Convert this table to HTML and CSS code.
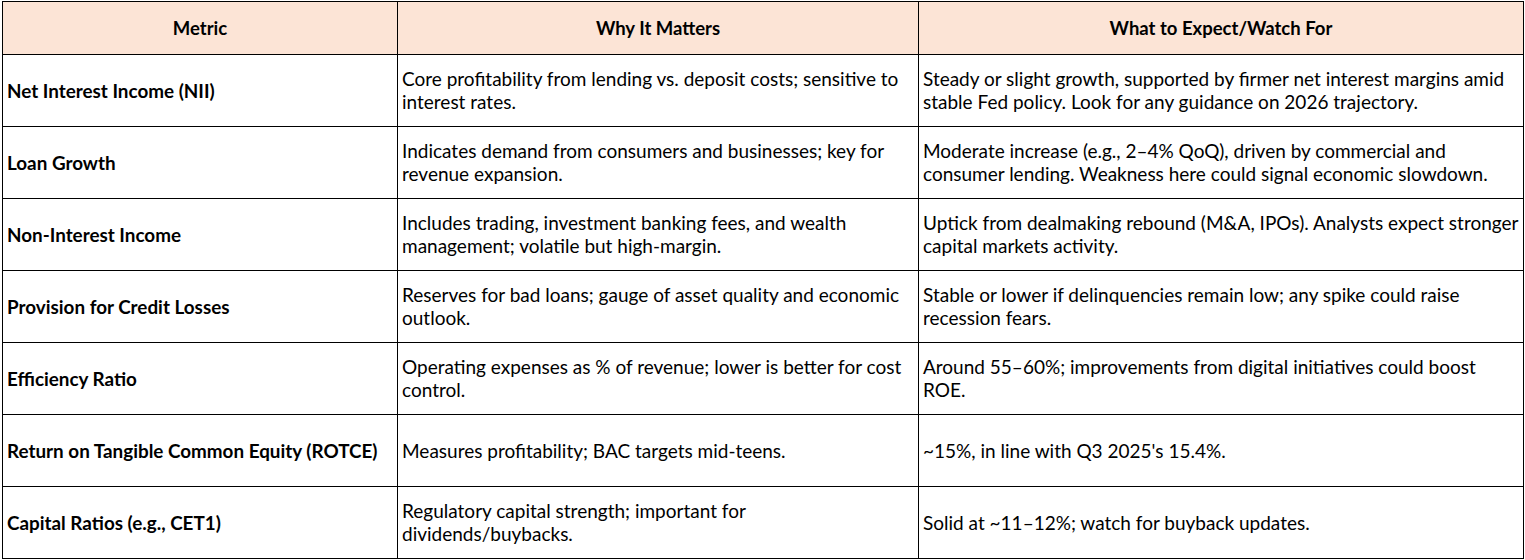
FILE: index.html
```html
<!DOCTYPE html>
<html>
<head>
<meta charset="utf-8">
<link rel="stylesheet" href="styles.css">
</head>
<body>
<table class="grid">
  <colgroup>
    <col class="c1"><col class="c2"><col class="c3">
  </colgroup>
  <thead>
    <tr class="head">
      <th>Metric</th>
      <th>Why It Matters</th>
      <th>What to Expect/Watch For</th>
    </tr>
  </thead>
  <tbody>
    <tr>
      <td class="metric">Net Interest Income (NII)</td>
      <td>Core profitability from lending vs. deposit costs; sensitive to<br>interest rates.</td>
      <td>Steady or slight growth, supported by firmer net interest margins amid<br>stable Fed policy. Look for any guidance on 2026 trajectory.</td>
    </tr>
    <tr>
      <td class="metric">Loan Growth</td>
      <td>Indicates demand from consumers and businesses; key for<br>revenue expansion.</td>
      <td>Moderate increase (e.g., 2–4% QoQ), driven by commercial and<br>consumer lending. Weakness here could signal economic slowdown.</td>
    </tr>
    <tr>
      <td class="metric">Non-Interest Income</td>
      <td>Includes trading, investment banking fees, and wealth<br>management; volatile but high-margin.</td>
      <td>Uptick from dealmaking rebound (M&amp;A, IPOs). Analysts expect stronger<br>capital markets activity.</td>
    </tr>
    <tr>
      <td class="metric">Provision for Credit Losses</td>
      <td>Reserves for bad loans; gauge of asset quality and economic<br>outlook.</td>
      <td>Stable or lower if delinquencies remain low; any spike could raise<br>recession fears.</td>
    </tr>
    <tr>
      <td class="metric">Efficiency Ratio</td>
      <td>Operating expenses as % of revenue; lower is better for cost<br>control.</td>
      <td>Around 55–60%; improvements from digital initiatives could boost<br>ROE.</td>
    </tr>
    <tr>
      <td class="metric">Return on Tangible Common Equity (ROTCE)</td>
      <td>Measures profitability; BAC targets mid-teens.</td>
      <td>~15%, in line with Q3 2025's 15.4%.</td>
    </tr>
    <tr>
      <td class="metric">Capital Ratios (e.g., CET1)</td>
      <td>Regulatory capital strength; important for<br>dividends/buybacks.</td>
      <td>Solid at ~11–12%; watch for buyback updates.</td>
    </tr>
  </tbody>
</table>
</body>
</html>
```

FILE: styles.css
```css
html, body {
  margin: 0;
  padding: 0;
  background: #ffffff;
}

body {
  padding: 1px 0 0 2px;
  font-family: Lato, "Open Sans", sans-serif;
  color: #000000;
}

.grid {
  border-collapse: collapse;
  table-layout: fixed;
  width: 1521px;
  border: 1px solid #000;
}

.c1 { width: 395px; }
.c2 { width: 521px; }
.c3 { width: 605px; }

.grid th,
.grid td {
  border: 1px solid #000;
  padding: 0 4px 1px;
  font-size: 19px;
  line-height: 23px;
  vertical-align: middle;
  white-space: nowrap;
  text-align: left;
}

.head th {
  background: #fce4d6;
  height: 52px;
  padding-bottom: 0;
  font-size: 18.5px;
  font-weight: 700;
  text-align: center;
}

.grid td {
  height: 70px;
}

.grid td.metric {
  font-size: 18.85px;
  font-weight: 700;
}
```
